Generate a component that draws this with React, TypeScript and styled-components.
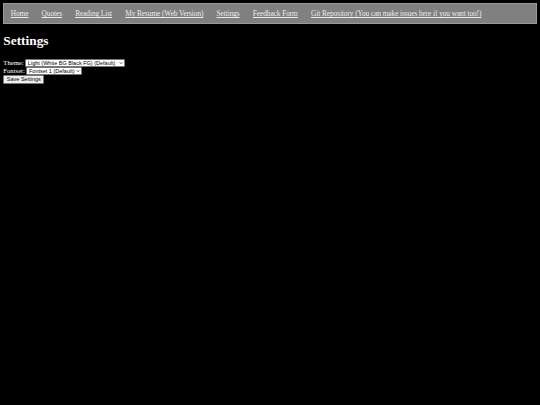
import styled, { createGlobalStyle } from "styled-components";

const GlobalStyle = createGlobalStyle`
    html, body {
        background: #000;
        color: #fff;
    }
    body {
        margin: 3.33px;
        font-family: "Liberation Serif", "Times New Roman", serif;
        font-size: 6.67px;
    }
`
const Nav = styled.nav`
    display: flex;
    align-items: center;
    height: 19px;
    background-color: #808080;
    border: 0.5px solid #9a9a9a;
`
const NavLink = styled.a`
    padding: 0 6.6px;
    font-size: 7.36px;
    letter-spacing: -0.08px;
    color: #ececec;
    text-decoration: underline;
    white-space: nowrap;
    &:first-child{
        padding-left: 6.4px;
    }
`
const Title = styled.h1`
    font-size: 13.33px;
    margin: 9px 0 9.5px 0;
`
const Row = styled.div`
    display: flex;
    align-items: center;
    height: 8px;
    label{
        margin-right: 1.7px;
    }
`
const Select = styled.select<{ $width: number }>`
    appearance: none;
    width: ${props => props.$width}px;
    height: 7.6px;
    padding: 0 0 0 1.5px;
    font-family: "Liberation Sans", Arial, sans-serif;
    font-size: 5.5px;
    line-height: 6px;
    color: #000;
    border: 0.5px solid #767676;
    border-radius: 1px;
    background: #fff url("data:image/svg+xml;utf8,<svg xmlns='http://www.w3.org/2000/svg' width='8' height='8' viewBox='0 0 8 8'><path d='M1.5 2.8 L4 5.3 L6.5 2.8' fill='none' stroke='black' stroke-width='1.4'/></svg>") no-repeat right 1px center / 4px 4px;
`
const Button = styled.button`
    display: block;
    width: 41px;
    height: 8.6px;
    margin-top: 0.3px;
    padding: 0;
    font-family: "Liberation Sans", Arial, sans-serif;
    font-size: 5.5px;
    line-height: 6px;
    color: #000;
    border: 0.5px solid #767676;
    border-radius: 1px;
    background: #efefef;
`

const links = [
    "Home",
    "Quotes",
    "Reading List",
    "My Resume (Web Version)",
    "Settings",
    "Feedback Form",
    "Git Repository (You can make issues here if you want too!)",
]

function App() {
    return (
        <>
            <GlobalStyle />
            <Nav>
                {links.map(link => <NavLink key={link} href="#">{link}</NavLink>)}
            </Nav>
            <Title>Settings</Title>
            <Row>
                <label>Theme:</label>
                <Select $width={100} defaultValue="light">
                    <option value="light">Light (White BG Black FG) (Default)</option>
                    <option value="dark">Dark</option>
                </Select>
            </Row>
            <Row>
                <label>Fontset:</label>
                <Select $width={56} defaultValue="1">
                    <option value="1">Fontset 1 (Default)</option>
                    <option value="2">Fontset 2</option>
                </Select>
            </Row>
            <Button>Save Settings</Button>
        </>
    )
}

export default App;
